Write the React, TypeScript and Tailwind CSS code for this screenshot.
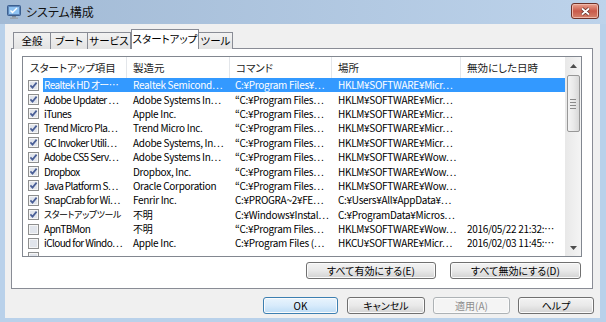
type Row = {
  on: boolean;
  sel?: boolean;
  jp?: boolean;
  name: string;
  maker: string;
  cmd: string;
  loc: string;
  date?: string;
};

const rows: Row[] = [
  { on: true, sel: true, name: "Realtek HD オー…", maker: "Realtek Semicond…", cmd: "C:¥Program Files¥…", loc: "HKLM¥SOFTWARE¥Micr…" },
  { on: true, name: "Adobe Updater …", maker: "Adobe Systems In…", cmd: "“C:¥Program Files…", loc: "HKLM¥SOFTWARE¥Micr…" },
  { on: true, name: "iTunes", maker: "Apple Inc.", cmd: "“C:¥Program Files…", loc: "HKLM¥SOFTWARE¥Micr…" },
  { on: true, name: "Trend Micro Pla…", maker: "Trend Micro Inc.", cmd: "“C:¥Program Files…", loc: "HKLM¥SOFTWARE¥Micr…" },
  { on: true, name: "GC Invoker Utili…", maker: "Adobe Systems, In…", cmd: "“C:¥Program Files…", loc: "HKLM¥SOFTWARE¥Micr…" },
  { on: true, name: "Adobe CS5 Serv…", maker: "Adobe Systems In…", cmd: "“C:¥Program Files…", loc: "HKLM¥SOFTWARE¥Wow…" },
  { on: true, name: "Dropbox", maker: "Dropbox, Inc.", cmd: "“C:¥Program Files…", loc: "HKLM¥SOFTWARE¥Wow…" },
  { on: true, name: "Java Platform S…", maker: "Oracle Corporation", cmd: "“C:¥Program Files…", loc: "HKLM¥SOFTWARE¥Wow…" },
  { on: true, name: "SnapCrab for Wi…", maker: "Fenrir Inc.", cmd: "C:¥PROGRA~2¥FE…", loc: "C:¥Users¥All¥AppData¥…" },
  { on: true, jp: true, name: "スタートアップツール", maker: "不明", cmd: "C:¥Windows¥Instal…", loc: "C:¥ProgramData¥Micros…" },
  { on: false, name: "ApnTBMon", maker: "不明", cmd: "“C:¥Program Files…", loc: "HKLM¥SOFTWARE¥Wow…", date: "2016/05/22 21:32:…" },
  { on: false, name: "iCloud for Windo…", maker: "Apple Inc.", cmd: "C:¥Program Files (…", loc: "HKCU¥SOFTWARE¥Micr…", date: "2016/02/03 11:45:…" },
  { on: false, name: "", maker: "", cmd: "", loc: "" },
];

function Check({ on }: { on: boolean }) {
  return (
    <svg width="11" height="11" viewBox="0 0 11 11" className="shrink-0">
      <rect x="0.5" y="0.5" width="10" height="10" fill="#f6f6f6" stroke="#8e8f8f" />
      <rect x="2" y="2" width="7" height="7" fill="#e1e5ec" />
      {on && <path d="M2.4 5.4 L4.5 7.6 L8.6 2.6" fill="none" stroke="#4a5f97" strokeWidth="1.7" />}
    </svg>
  );
}

function Btn({ label, w, kind }: { label: string; w: string; kind?: "default" | "disabled" }) {
  const base = "h-[17px] rounded-[3px] border flex items-center justify-center text-[10px] leading-none shadow-[inset_0_0_0_1px_#fbfbfb] ";
  const look =
    kind === "default"
      ? "border-[#3c7fb1] bg-linear-to-b from-[#e9f4fd] via-[#d8ebfb] to-[#bcdcf6] text-black"
      : kind === "disabled"
        ? "border-[#adb2b5] bg-[#f4f4f4] text-[#8d8d8d]"
        : "border-[#707070] bg-linear-to-b from-[#f3f3f3] via-[#e9e9e9] to-[#d3d3d3] text-black";
  return <div className={base + look + " " + w}>{label}</div>;
}

export default function App() {
  return (
    <div className="w-[606px] h-[322px] bg-[#b9d1ea] flex flex-col overflow-hidden font-['Noto_Sans_CJK_JP',sans-serif] [font-feature-settings:'palt'] text-black">
      {/* title bar */}
      <div className="h-[24px] shrink-0 flex items-center bg-linear-to-r from-[#a2bad5] to-[#bdd3eb] pl-[7px] pr-[7px]">
        <svg width="14" height="14" viewBox="0 0 14 14">
          <rect x="0.5" y="0.5" width="13" height="10" rx="1" fill="#5f86b8" stroke="#3b5f8f" />
          <rect x="2" y="2" width="10" height="7" fill="#8fc3f2" />
          <path d="M3.5 5.5 L5.5 7.5 L10 3" fill="none" stroke="#ffffff" strokeWidth="1.4" />
          <rect x="5" y="11" width="4" height="1.5" fill="#7d8894" />
          <rect x="3" y="12.5" width="8" height="1.5" fill="#9aa4ae" />
        </svg>
        <span className="ml-[5px] text-[12px] leading-none text-[#111]">システム構成</span>
        <div className="ml-auto mt-[-2px] w-[28px] h-[16px] rounded-[3px] border border-[#6e3128] bg-linear-to-b from-[#e9a391] via-[#c9594a] to-[#d3816c] flex items-center justify-center shadow-[inset_0_0_0_1px_#f0b8aa]">
          <svg width="11" height="9" viewBox="0 0 11 9">
            <path d="M2 1.5 L9 7.5 M9 1.5 L2 7.5" stroke="#5a2a22" strokeWidth="3.2" />
            <path d="M2 1.5 L9 7.5 M9 1.5 L2 7.5" stroke="#ffffff" strokeWidth="1.8" />
          </svg>
        </div>
      </div>

      {/* client */}
      <div className="flex-1 ml-[5px] mr-[6px] mb-[4px] bg-[#f0f0f0] flex flex-col">
        {/* tabs */}
        <div className="relative z-10 ml-[8px] mt-[5px] h-[20px] -mb-px flex items-end text-[10.5px] leading-none">
          <div className="w-[38px] h-[17px] border border-b-0 border-[#898c95] bg-linear-to-b from-[#f2f2f2] to-[#e3e3e3] flex items-center justify-center">全般</div>
          <div className="w-[37px] h-[17px] border border-b-0 border-l-0 border-[#898c95] bg-linear-to-b from-[#f2f2f2] to-[#e3e3e3] flex items-center justify-center">ブート</div>
          <div className="w-[43px] h-[17px] border border-b-0 border-l-0 border-[#898c95] bg-linear-to-b from-[#f2f2f2] to-[#e3e3e3] flex items-center justify-center">サービス</div>
          <div className="w-[68px] h-[20px] border border-b-0 border-[#898c95] bg-white flex items-center justify-center">スタートアップ</div>
          <div className="w-[34px] h-[17px] border border-b-0 border-l-0 border-[#898c95] bg-linear-to-b from-[#f2f2f2] to-[#e3e3e3] flex items-center justify-center">ツール</div>
        </div>

        {/* tab panel */}
        <div className="ml-[6px] w-[582px] h-[241px] border border-[#898c95] bg-white flex flex-col">
          <div className="mt-[7px] ml-[10px] w-[560px] h-[201px] border border-[#828790] bg-white flex text-[10px] leading-[14px]">
            <div className="flex-1 flex flex-col overflow-hidden">
              <div className="h-[21px] shrink-0 flex items-center text-[10.5px] text-[#1b1b1b]">
                <div className="w-[104px] h-full flex items-center pl-[7px] border-r border-[#e3e6ea]">スタートアップ項目</div>
                <div className="w-[103px] h-full flex items-center pl-[6px] border-r border-[#e3e6ea]">製造元</div>
                <div className="w-[102px] h-full flex items-center pl-[6px] border-r border-[#e3e6ea]">コマンド</div>
                <div className="w-[129px] h-full flex items-center pl-[6px] border-r border-[#e3e6ea]">場所</div>
                <div className="w-[104px] h-full flex items-center pl-[6px]">無効にした日時</div>
              </div>
              {rows.map((r, i) => (
                <div key={i} className="h-[14.4px] shrink-0 flex items-center tracking-[-0.3px]">
                  <div className="w-[20px] h-full flex items-center pl-[5px]">
                    <Check on={r.on} />
                  </div>
                  <div className={"flex-1 h-full flex items-center whitespace-nowrap " + (r.sel ? "bg-[#3399ff] text-white" : "")}>
                    <div className={"w-[86px] pl-[1px] truncate " + (r.jp ? "text-[9px] tracking-[-0.4px]" : "tracking-[-0.6px]")}>{r.name}</div>
                    <div className="w-[101px] pl-[4px] truncate">{r.maker}</div>
                    <div className="w-[102px] pl-[5px] truncate">{r.cmd}</div>
                    <div className="w-[129px] pl-[6px] truncate">{r.loc}</div>
                    <div className="w-[104px] pl-[6px] truncate">{r.date}</div>
                  </div>
                </div>
              ))}
            </div>

            {/* scrollbar */}
            <div className="w-[16px] h-full bg-linear-to-r from-[#e8e8e8] to-[#f4f4f4] flex flex-col items-center">
              <div className="h-[17px] w-full flex items-center justify-center">
                <svg width="7" height="4" viewBox="0 0 7 4"><path d="M0 4 L3.5 0 L7 4 Z" fill="#4d4d4d" /></svg>
              </div>
              <div className="mt-px w-[13px] h-[57px] rounded-[2px] border border-[#979797] bg-linear-to-r from-[#f4f4f4] via-[#e9e9e9] to-[#d8d8d8] flex flex-col items-center justify-center gap-[2px]">
                <div className="w-[6px] h-px bg-[#8a8a8a]" />
                <div className="w-[6px] h-px bg-[#8a8a8a]" />
                <div className="w-[6px] h-px bg-[#8a8a8a]" />
                <div className="w-[6px] h-px bg-[#8a8a8a]" />
              </div>
              <div className="mt-auto h-[17px] w-full flex items-center justify-center">
                <svg width="7" height="4" viewBox="0 0 7 4"><path d="M0 0 L3.5 4 L7 0 Z" fill="#4d4d4d" /></svg>
              </div>
            </div>
          </div>

          <div className="ml-[10px] w-[560px] mt-[5px] flex justify-end gap-[14px] pr-px">
            <Btn label="すべて有効にする(E)" w="w-[130px]" />
            <Btn label="すべて無効にする(D)" w="w-[131px]" />
          </div>
        </div>

        {/* dialog buttons */}
        <div className="mt-[8px] mr-[6px] flex justify-end">
          <Btn label="OK" w="w-[75px]" kind="default" />
          <div className="w-[9px]" />
          <Btn label="キャンセル" w="w-[78px]" />
          <div className="w-[8px]" />
          <Btn label="適用(A)" w="w-[77px]" kind="disabled" />
          <div className="w-[8px]" />
          <Btn label="ヘルプ" w="w-[76px]" />
        </div>
      </div>
    </div>
  );
}
